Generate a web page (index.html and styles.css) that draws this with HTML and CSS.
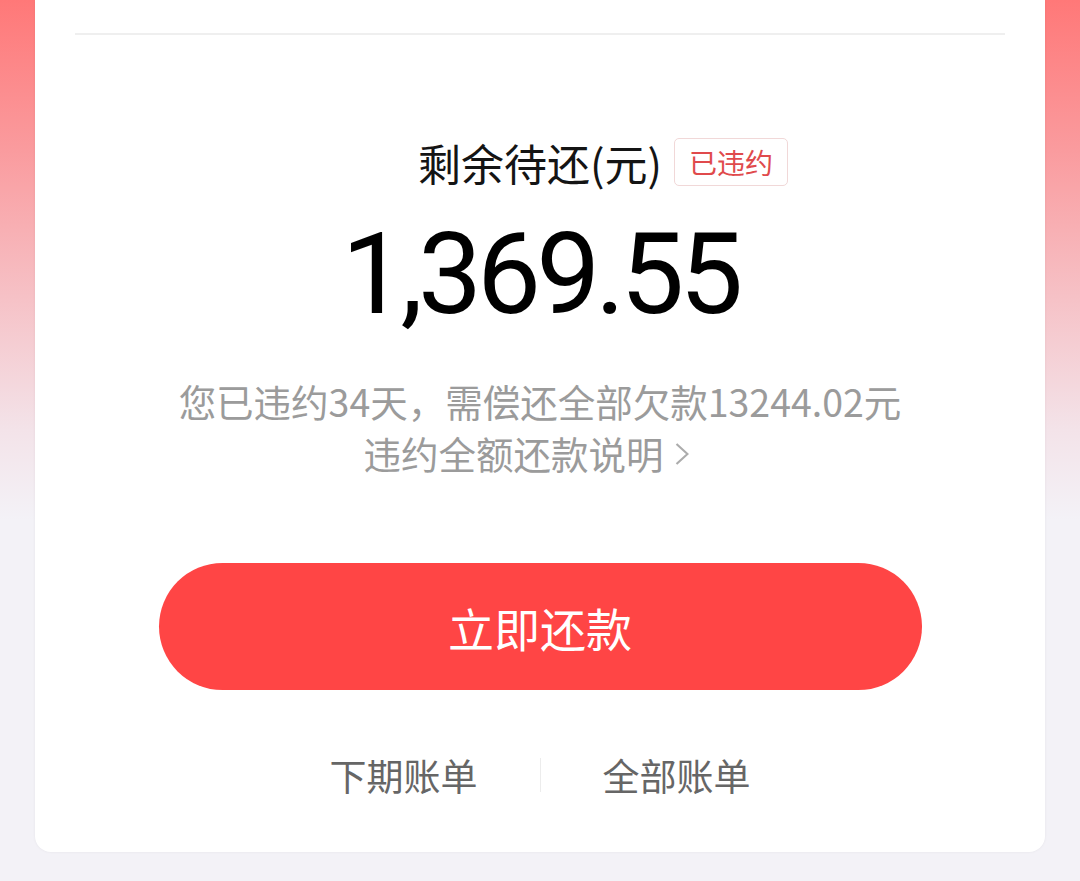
FILE: index.html
```html
<!DOCTYPE html>
<html lang="zh-CN">
<head>
  <meta charset="utf-8" />
  <title>剩余待还</title>
  <meta name="viewport" content="width=device-width, initial-scale=1.0" />
  <link rel="stylesheet" href="styles.css">
</head>
<body>
  <main class="card">
    <div class="rule"></div>

    <div class="title-row">
      <span class="title">剩余待还(元)</span>
      <span class="tag">已违约</span>
    </div>
    <div class="amount">1,369.55</div>

    <div class="note">
      <p>您已违约34天，需偿还全部欠款13244.02元</p>
      <a class="note-link" href="#">违约全额还款说明
        <svg class="chevron" viewBox="0 0 14 22" width="14" height="22">
          <path d="M1.5 1 L12.5 11 L1.5 21" fill="none" stroke="#acacac" stroke-width="2.2" />
        </svg>
      </a>
    </div>

    <button class="pay">立即还款</button>

    <nav class="bills">
      <a href="#">下期账单</a>
      <span class="sep"></span>
      <a href="#">全部账单</a>
    </nav>
  </main>
</body>
</html>
```

FILE: styles.css
```css
body {
  margin: 0;
  min-height: 881px;
  font-family: "Noto Sans CJK SC", "Noto Sans", sans-serif;
  background: linear-gradient(180deg, #ff7878 0, #fa9b9e 150px, #f6c2c7 300px, #f3e3e9 430px, #f3f2f7 520px) no-repeat;
  background-color: #f3f2f7;
}

.card {
  margin: 0 35px;
  padding: 33px 40px 51px;
  background: #fff;
  border-radius: 0 0 16px 16px;
  box-shadow: 0 0 3px rgba(0, 0, 0, 0.06);
  text-align: center;
}

.rule {
  height: 2px;
  background: #efefef;
}

/* title stays centred, the tag hangs off its right side */
.title-row {
  display: grid;
  grid-template-columns: 1fr auto 1fr;
  align-items: center;
  margin-top: 103px;
}

.title {
  grid-column: 2;
  font-size: 43px;
  line-height: 48px;
  color: #141414;
}

.tag {
  grid-column: 3;
  justify-self: start;
  box-sizing: border-box;
  height: 48px;
  margin-left: 12px;
  padding: 0 14px;
  border: 1px solid #f1d8d8;
  border-radius: 5px;
  font-size: 28px;
  line-height: 46px;
  color: #e04a4c;
}

.amount {
  margin-top: 33px;
  font-family: Roboto, "Liberation Sans", sans-serif;
  font-size: 114px;
  line-height: 110px;
  letter-spacing: -5px;
  color: #000;
}

.note {
  margin-top: 46px;
  font-size: 37.5px;
  line-height: 52px;
  color: #9b9b9b;
}

.note p {
  margin: 0;
}

.note-link {
  display: inline-flex;
  align-items: center;
  gap: 11px;
  padding-right: 28px;
  color: #9b9b9b;
  text-decoration: none;
}

.chevron {
  margin-top: 2px;
}

.pay {
  display: block;
  width: 763px;
  height: 127px;
  margin: 84px auto 0;
  border: none;
  border-radius: 64px;
  background: #ff4545;
  color: #fff;
  font-family: inherit;
  font-size: 46px;
  cursor: pointer;
}

.bills {
  display: flex;
  justify-content: center;
  align-items: center;
  gap: 62px;
  margin-top: 59px;
  font-size: 37px;
  line-height: 52px;
}

.bills a {
  color: #666;
  text-decoration: none;
}

.sep {
  width: 1px;
  height: 34px;
  background: #ececec;
}
```
